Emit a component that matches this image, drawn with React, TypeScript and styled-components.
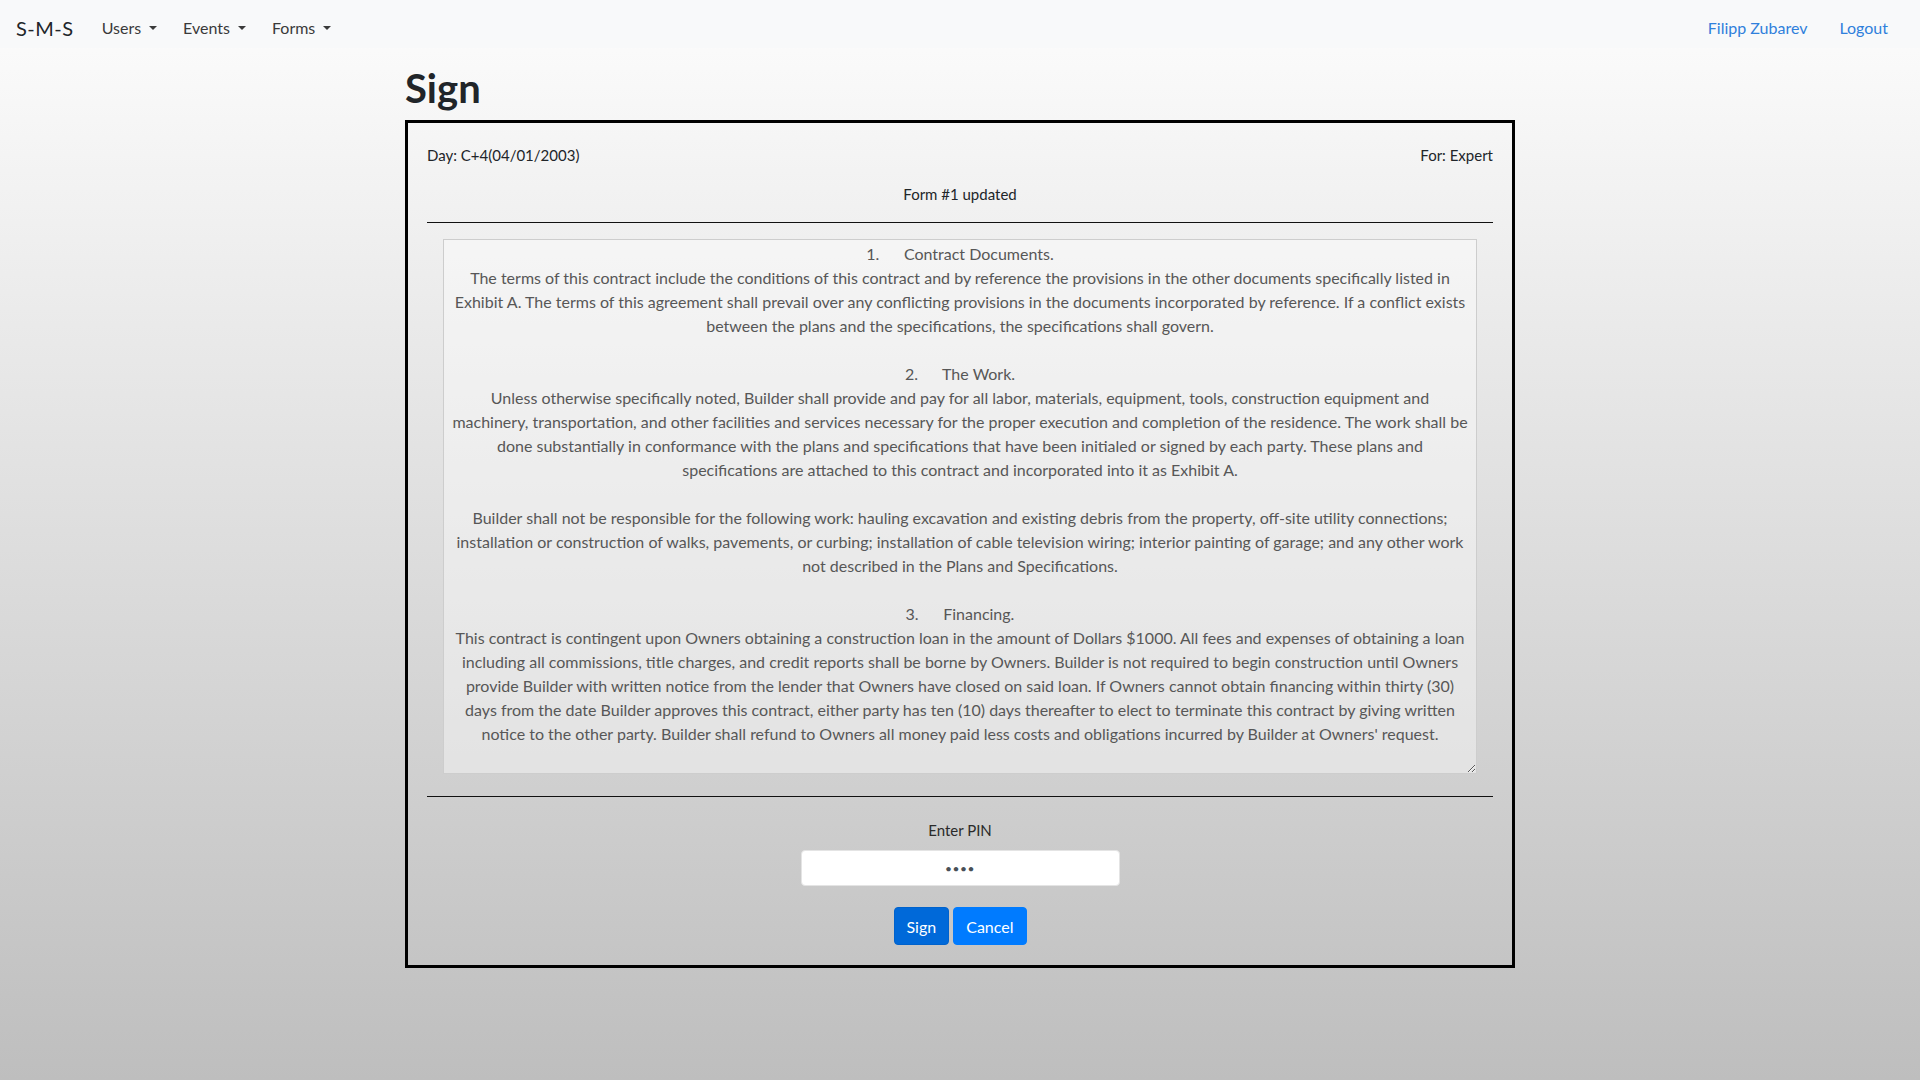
import React from 'react';
import styled, { createGlobalStyle } from 'styled-components';

// line breaks follow the wrapping of the original textarea
const CONTRACT_LINES = [
  '1.      Contract Documents.',
  'The terms of this contract include the conditions of this contract and by reference the provisions in the other documents specifically listed in',
  'Exhibit A. The terms of this agreement shall prevail over any conflicting provisions in the documents incorporated by reference. If a conflict exists',
  'between the plans and the specifications, the specifications shall govern.',
  '',
  '2.      The Work.',
  'Unless otherwise specifically noted, Builder shall provide and pay for all labor, materials, equipment, tools, construction equipment and',
  'machinery, transportation, and other facilities and services necessary for the proper execution and completion of the residence. The work shall be',
  'done substantially in conformance with the plans and specifications that have been initialed or signed by each party. These plans and',
  'specifications are attached to this contract and incorporated into it as Exhibit A.',
  '',
  'Builder shall not be responsible for the following work: hauling excavation and existing debris from the property, off-site utility connections;',
  'installation or construction of walks, pavements, or curbing; installation of cable television wiring; interior painting of garage; and any other work',
  'not described in the Plans and Specifications.',
  '',
  '3.      Financing.',
  'This contract is contingent upon Owners obtaining a construction loan in the amount of Dollars $1000. All fees and expenses of obtaining a loan',
  'including all commissions, title charges, and credit reports shall be borne by Owners. Builder is not required to begin construction until Owners',
  'provide Builder with written notice from the lender that Owners have closed on said loan. If Owners cannot obtain financing within thirty (30)',
  'days from the date Builder approves this contract, either party has ten (10) days thereafter to elect to terminate this contract by giving written',
  "notice to the other party. Builder shall refund to Owners all money paid less costs and obligations incurred by Builder at Owners' request.",
];

const GlobalStyle = createGlobalStyle`
  html, body {
    margin: 0;
    padding: 0;
  }
  body {
    min-height: 100vh;
    background: linear-gradient(to bottom, #fdfdfd 0%, #bebebe 100%);
    font-family: Lato, "Open Sans", "Liberation Sans", sans-serif;
    font-size: 16px;
    line-height: 1.5;
    color: #212529;
  }
  * {
    box-sizing: border-box;
  }
`;

const App: React.FC = () => {
  return (
    <>
      <GlobalStyle />
      <Navbar>
        <Brand>S-M-S</Brand>
        <NavList>
          <DropdownLink>Users</DropdownLink>
          <DropdownLink>Events</DropdownLink>
          <DropdownLink>Forms</DropdownLink>
        </NavList>
        <UserLinks>
          <UserLink>Filipp Zubarev</UserLink>
          <UserLink>Logout</UserLink>
        </UserLinks>
      </Navbar>

      <Container>
        <PageTitle>Sign</PageTitle>
        <SignBox>
          <MetaRow>
            <span>Day: C+4(04/01/2003)</span>
            <span>For: Expert</span>
          </MetaRow>
          <FormTitle>Form #1 updated</FormTitle>
          <Divider />
          <ContractArea readOnly defaultValue={CONTRACT_LINES.join('\n')} />
          <Divider />
          <PinSection>
            <PinLabel>Enter PIN</PinLabel>
            <PinInput type="password" defaultValue="1234" readOnly />
            <ButtonRow>
              <ActionButton $active>Sign</ActionButton>
              <ActionButton>Cancel</ActionButton>
            </ButtonRow>
          </PinSection>
        </SignBox>
      </Container>
    </>
  );
};

const Navbar = styled.nav`
  display: flex;
  align-items: center;
  height: 48px;
  padding: 8px 32px 0 16px;
  background-color: #f8f9fa;
`;

const Brand = styled.span`
  font-size: 20px;
  letter-spacing: 0.5px;
  color: #212529;
  margin-right: 28px;
`;

const NavList = styled.div`
  display: flex;
  align-items: center;
  gap: 26px;
  flex: 1;
`;

const DropdownLink = styled.span`
  font-size: 16px;
  color: #3a3a3a;
  cursor: pointer;

  &::after {
    content: '';
    display: inline-block;
    margin-left: 8px;
    vertical-align: 0.255em;
    border-top: 0.3em solid;
    border-right: 0.3em solid transparent;
    border-left: 0.3em solid transparent;
  }
`;

const UserLinks = styled.div`
  display: flex;
  align-items: center;
  gap: 32px;
`;

const UserLink = styled.a`
  font-size: 16px;
  color: #2f80dc;
  cursor: pointer;
`;

const Container = styled.main`
  width: 1110px;
  margin: 0 auto;
  padding-bottom: 40px;
`;

const PageTitle = styled.h1`
  font-size: 40px;
  font-weight: 700;
  line-height: 1.2;
  margin: 16px 0 8px;
  color: #212529;
`;

const SignBox = styled.section`
  border: 3px solid #000;
  padding: 20px 19px;
`;

const MetaRow = styled.div`
  display: flex;
  justify-content: space-between;
  line-height: 24px;
  font-size: 15px;
`;

const FormTitle = styled.div`
  text-align: center;
  font-size: 15px;
  line-height: 24px;
  margin-top: 15px;
`;

const Divider = styled.hr`
  border: 0;
  border-top: 1px solid #111;
  margin: 16px 0;
`;

const ContractArea = styled.textarea`
  display: block;
  width: calc(100% - 32px);
  height: 535px;
  margin: 0 auto 22px;
  padding: 2px;
  font-family: inherit;
  font-size: 16px;
  line-height: 24px;
  text-align: center;
  white-space: pre;
  overflow: hidden;
  color: #575757;
  background-color: rgba(255, 255, 255, 0.4);
  border: 1px solid #cdcdcd;
  outline: none;
`;

const PinSection = styled.div`
  display: flex;
  flex-direction: column;
  align-items: center;
  padding-top: 5px;
`;

const PinLabel = styled.label`
  font-size: 15px;
  line-height: 24px;
  color: #2a2a2a;
  margin-bottom: 8px;
`;

const PinInput = styled.input`
  width: 319px;
  height: 36px;
  border: 1px solid #e4e4e4;
  border-radius: 4px;
  background: #fff;
  text-align: center;
  font-family: inherit;
  font-size: 12px;
  color: #495057;
  letter-spacing: 0.5px;
  outline: none;
`;

const ButtonRow = styled.div`
  display: flex;
  gap: 4px;
  margin-top: 21px;
`;

const ActionButton = styled.button<{ $active?: boolean }>`
  height: 38px;
  padding: 0 12px;
  font-family: inherit;
  font-size: 16px;
  color: #fff;
  background-color: ${p => (p.$active ? '#0069d9' : '#007bff')};
  border: 1px solid ${p => (p.$active ? '#0062cc' : '#007bff')};
  border-radius: 4px;
  cursor: pointer;
`;

export default App;
